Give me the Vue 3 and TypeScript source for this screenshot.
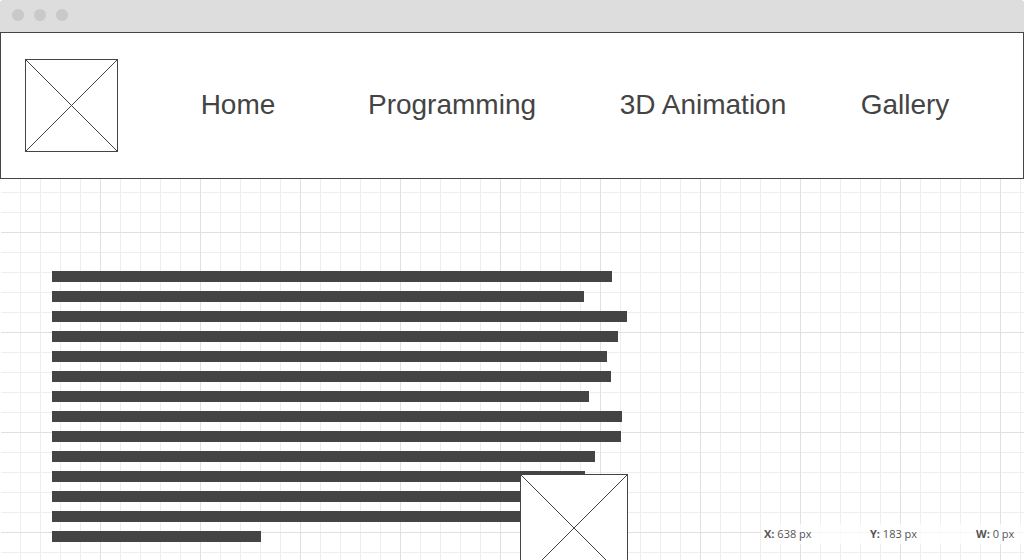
<script setup lang="ts">
interface Readout {
  name: string
  value: string
}

const navItems: string[] = ['Home', 'Programming', '3D Animation', 'Gallery']

const lineWidths: number[] = [560, 532, 575, 566, 555, 559, 537, 570, 569, 543, 533, 560, 560, 209]

const readouts: Readout[] = [
  { name: 'X:', value: '638 px' },
  { name: 'Y:', value: '183 px' },
  { name: 'W:', value: '0 px' },
]
</script>

<template>
  <div class="window">
    <div class="titlebar">
      <span class="dot"></span>
      <span class="dot"></span>
      <span class="dot"></span>
    </div>
    <header class="header">
      <svg class="logo" viewBox="0 0 93 93" shape-rendering="crispEdges" role="img" aria-label="Logo">
        <rect x="0.5" y="0.5" width="92" height="92" />
        <path d="M0 0L93 93M93 0L0 93" />
      </svg>
      <nav class="nav">
        <a v-for="item in navItems" :key="item" href="#">{{ item }}</a>
      </nav>
    </header>
    <main class="canvas">
      <div class="copy">
        <div v-for="(width, i) in lineWidths" :key="i" class="line" :style="{ width: width + 'px' }"></div>
      </div>
      <svg class="picture" viewBox="0 0 108 108" shape-rendering="crispEdges" role="img" aria-label="Image">
        <rect x="0.5" y="0.5" width="107" height="107" />
        <path d="M0 0L108 108M108 0L0 108" />
      </svg>
      <div class="status">
        <span v-for="item in readouts" :key="item.name"><b>{{ item.name }}</b> {{ item.value }}</span>
      </div>
    </main>
  </div>
</template>

<style>
body {
  margin: 0;
  background: #fff;
}
</style>

<style scoped>
.window {
  display: flex;
  flex-direction: column;
  height: 100vh;
  overflow: hidden;
  font-family: "Liberation Sans", Arial, sans-serif;
  color: #444;
}

.titlebar {
  display: flex;
  flex: none;
  align-items: center;
  gap: 10px;
  box-sizing: border-box;
  height: 32px;
  padding: 0 12px 2px;
  background: #ddd;
  border-radius: 3px 3px 0 0;
}

.dot {
  width: 12px;
  height: 12px;
  border-radius: 50%;
  background: #c9c9c9;
}

.header {
  display: flex;
  flex: none;
  align-items: center;
  box-sizing: border-box;
  padding: 26px 24px;
  border: 1px solid #444;
  background: #fff;
}

.logo {
  flex: none;
  width: 93px;
  height: 93px;
}

svg rect {
  fill: #fff;
  stroke: #444;
}

svg path {
  fill: none;
  stroke: #444;
}

.nav {
  display: grid;
  flex: 1;
  grid-template-columns: 214fr 214fr 288fr 116fr;
  justify-items: center;
  margin: 0 36px 0 13px;
  padding-bottom: 2px;
  font-size: 28px;
  line-height: 32px;
}

.nav a {
  color: #444;
  text-decoration: none;
  white-space: nowrap;
}

.canvas {
  position: relative;
  flex: 1;
  min-height: 0;
  margin-left: 1px;
  padding: 92px 51px 0;
  background-color: #fff;
  background-image:
    linear-gradient(90deg, #e0e0e0 1px, transparent 1px),
    linear-gradient(#e0e0e0 1px, transparent 1px),
    linear-gradient(90deg, #eee 1px, transparent 1px),
    linear-gradient(#eee 1px, transparent 1px);
  background-size: 100px 100px, 100px 100px, 20px 20px, 20px 20px;
  background-position: -1px 53px, -1px 53px, -1px 13px, -1px 13px;
}

.copy {
  display: flex;
  flex-direction: column;
  gap: 9px;
}

.line {
  height: 11px;
  background: #444;
}

.picture {
  position: absolute;
  top: 295px;
  left: 519px;
  width: 108px;
  height: 108px;
}

.status {
  position: absolute;
  right: 0;
  bottom: 16px;
  display: grid;
  grid-template-columns: 106px 106px 48px;
  padding-left: 3px;
  background: rgba(255, 255, 255, 0.75);
  font-family: "Open Sans", sans-serif;
  font-size: 11px;
  line-height: 20px;
  color: #555;
  white-space: nowrap;
}
</style>
